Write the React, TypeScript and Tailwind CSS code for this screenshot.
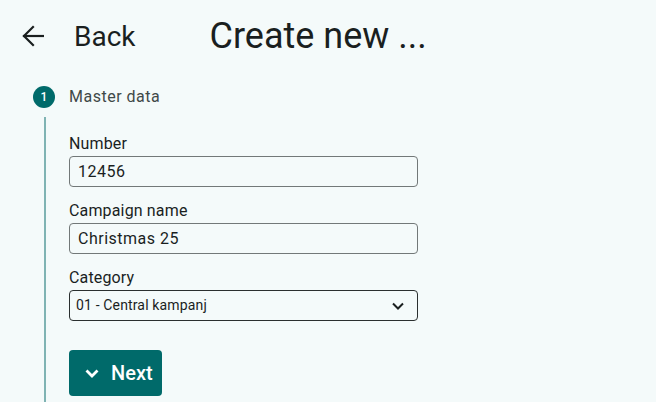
import { useState } from 'react'

const font = { fontFamily: 'Roboto, "Noto Sans", sans-serif' }

function Field({ label, value, onChange }: { label: string; value: string; onChange: (v: string) => void }) {
  return (
    <label className="flex flex-col gap-[2px]">
      <span className="text-[16px] leading-[20px] tracking-[0.15px] text-[#1a1f1f]">{label}</span>
      <input
        value={value}
        onChange={e => onChange(e.target.value)}
        className="h-[31px] w-[349px] rounded-[4px] border border-[#727878] bg-transparent px-[8px] text-[16px] tracking-[0.5px] text-[#1a1f1f] outline-none"
      />
    </label>
  )
}

export default function App() {
  const [number, setNumber] = useState('12456')
  const [name, setName] = useState('Christmas 25')

  return (
    <div className="h-[402px] w-full overflow-hidden bg-[#f4fafa] text-[#1a1f1f]" style={font}>
      {/* header */}
      <div className="flex h-[72px] items-center">
        <button className="ml-[22px] flex h-[22px] w-[22px] items-center justify-center text-[#1a1f1f]">
          <svg width="22" height="22" viewBox="0 0 22 22" fill="none" stroke="currentColor" strokeWidth="2.2" strokeLinecap="square">
            <path d="M2 11 H21" />
            <path d="M11 2 L2 11 L11 20" />
          </svg>
        </button>
        <span className="ml-[30px] mt-[2px] text-[28px] leading-none">Back</span>
        <h1 className="ml-[74px] text-[36px] leading-none">Create new ...</h1>
      </div>

      {/* step */}
      <div className="ml-[33px] mt-[14px]">
        <div className="flex items-center gap-[14px]">
          <div className="flex h-[22px] w-[22px] items-center justify-center rounded-full bg-[#006a6a] text-[12px] font-medium text-white">1</div>
          <span className="text-[16px] leading-[20px] tracking-[0.5px] text-[#3f4948]">Master data</span>
        </div>

        <div className="ml-[11px] mt-[9px] border-l-2 border-[#7fb3b3] pl-[23px] pt-[17px] pb-[40px]">
          <div className="flex flex-col gap-[14px]">
            <Field label="Number" value={number} onChange={setNumber} />
            <Field label="Campaign name" value={name} onChange={setName} />
            <label className="flex flex-col gap-[2px]">
              <span className="text-[16px] leading-[20px] tracking-[0.15px]">Category</span>
              <div className="relative w-[349px]">
                <select className="h-[31px] w-full appearance-none rounded-[4px] border border-[#2a2f2f] bg-transparent pl-[6px] text-[14px] tracking-[0.15px] text-[#1a1f1f] outline-none">
                  <option>01 - Central kampanj</option>
                </select>
                <svg className="pointer-events-none absolute right-[14px] top-[12px]" width="12" height="8" viewBox="0 0 12 8" fill="none" stroke="#1a1f1f" strokeWidth="2">
                  <path d="M1 1.5 L6 6.5 L11 1.5" />
                </svg>
              </div>
            </label>
          </div>

          <button className="mt-[29px] flex h-[46px] items-center gap-[12px] rounded-[4px] bg-[#006a6a] pl-[16px] pr-[9px] text-[20px] font-medium text-white">
            <svg width="14" height="9" viewBox="0 0 14 9" fill="none" stroke="currentColor" strokeWidth="2.8">
              <path d="M1.5 1.5 L7 7 L12.5 1.5" />
            </svg>
            Next
          </button>
        </div>
      </div>
    </div>
  )
}
